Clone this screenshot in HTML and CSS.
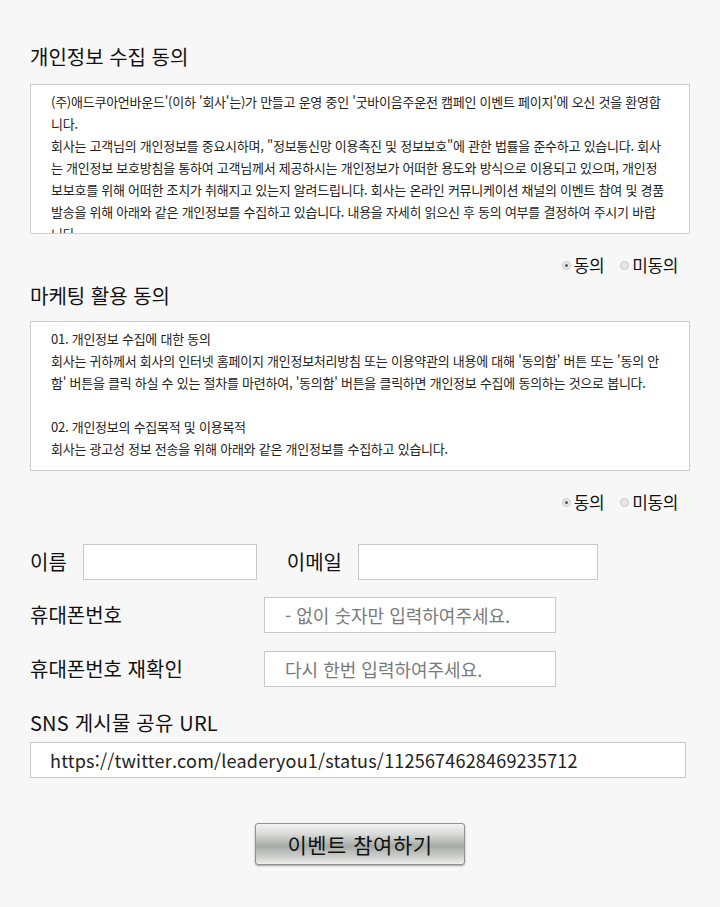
FILE: index.html
```html
<!DOCTYPE html>
<html lang="ko">
<head>
<meta charset="utf-8">
<title>이벤트 참여</title>
<link rel="stylesheet" href="styles.css">
</head>
<body>
<div class="page">
  <section class="agree">
    <h2 class="sec-title">개인정보 수집 동의</h2>
    <div class="terms terms-1">
      <p>(주)애드쿠아언바운드'(이하 '회사'는)가 만들고 운영 중인 '굿바이음주운전 캠페인 이벤트 페이지'에 오신 것을 환영합니다.<br>회사는 고객님의 개인정보를 중요시하며, "정보통신망 이용촉진 및 정보보호"에 관한 법률을 준수하고 있습니다. 회사는 개인정보 보호방침을 통하여 고객님께서 제공하시는 개인정보가 어떠한 용도와 방식으로 이용되고 있으며, 개인정보보호를 위해 어떠한 조치가 취해지고 있는지 알려드립니다. 회사는 온라인 커뮤니케이션 채널의 이벤트 참여 및 경품 발송을 위해 아래와 같은 개인정보를 수집하고 있습니다. 내용을 자세히 읽으신 후 동의 여부를 결정하여 주시기 바랍니다.</p>
    </div>
    <div class="radios">
      <label class="radio"><span class="dot checked"></span>동의</label>
      <label class="radio"><span class="dot"></span>미동의</label>
    </div>
  </section>

  <section class="agree">
    <h2 class="sec-title sec-title-2">마케팅 활용 동의</h2>
    <div class="terms terms-2">
      <p>01. 개인정보 수집에 대한 동의<br>회사는 귀하께서 회사의 인터넷 홈페이지 개인정보처리방침 또는 이용약관의 내용에 대해 '동의함' 버튼 또는 '동의 안함' 버튼을 클릭 하실 수 있는 절차를 마련하여, '동의함' 버튼을 클릭하면 개인정보 수집에 동의하는 것으로 봅니다.<br><br>02. 개인정보의 수집목적 및 이용목적<br>회사는 광고성 정보 전송을 위해 아래와 같은 개인정보를 수집하고 있습니다.</p>
    </div>
    <div class="radios">
      <label class="radio"><span class="dot checked"></span>동의</label>
      <label class="radio"><span class="dot"></span>미동의</label>
    </div>
  </section>

  <form class="form">
    <div class="row-inline">
      <span class="label">이름</span>
      <input class="field field-name" type="text">
      <span class="label label-email">이메일</span>
      <input class="field field-email" type="text">
    </div>
    <div class="row-grid">
      <span class="label">휴대폰번호</span>
      <input class="field field-phone" type="text" placeholder="- 없이 숫자만 입력하여주세요.">
    </div>
    <div class="row-grid">
      <span class="label">휴대폰번호 재확인</span>
      <input class="field field-phone" type="text" placeholder="다시 한번 입력하여주세요.">
    </div>
    <div class="row-sns">
      <span class="label">SNS 게시물 공유 URL</span>
      <input class="field field-url" type="text" value="https://twitter.com/leaderyou1/status/1125674628469235712">
    </div>
    <div class="submit-wrap">
      <button class="submit" type="button">이벤트 참여하기</button>
    </div>
  </form>
</div>
</body>
</html>
```
FILE: styles.css
```css
html, body {
  margin: 0;
  padding: 0;
  background: #f7f7f7;
}
body {
  font-family: "Noto Sans CJK KR", "Noto Sans", sans-serif;
  color: #111;
}
.page {
  width: 660px;
  padding: 0 30px;
}
.sec-title {
  margin: 0 0 14px;
  padding-top: 44px;
  font-size: 20px;
  font-weight: 400;
  line-height: 26px;
  letter-spacing: 0;
}
.sec-title-2 {
  padding-top: 1px;
  margin-bottom: 12px;
}
.terms {
  box-sizing: border-box;
  width: 660px;
  height: 150px;
  background: #fff;
  border: 1px solid #cfcfcf;
  overflow: hidden;
  padding: 6px 20px 0 20px;
}
.terms-1 {
  padding-right: 25px;
}
.terms p {
  margin: 0;
  font-size: 13px;
  line-height: 22px;
  color: #222;
  letter-spacing: -0.25px;
}
.radios {
  display: flex;
  justify-content: flex-end;
  gap: 16px;
  padding-right: 12px;
  height: 48px;
  padding-top: 13px;
  box-sizing: border-box;
  font-size: 17px;
  line-height: 22px;
  letter-spacing: -0.4px;
}
.radio {
  display: flex;
  align-items: center;
  gap: 3px;
}
.dot {
  box-sizing: border-box;
  width: 9px;
  height: 9px;
  border-radius: 50%;
  border: 1px solid #c8c8c8;
  background: #e8e8e8;
  position: relative;
  margin-top: 1px;
}
.dot.checked::after {
  content: "";
  position: absolute;
  left: 2px;
  top: 2px;
  width: 3px;
  height: 3px;
  border-radius: 50%;
  background: #555;
}
.form {
  padding-top: 25px;
}
.label {
  font-size: 20px;
  line-height: 26px;
  letter-spacing: 0;
  color: #111;
}
.field {
  box-sizing: border-box;
  height: 36px;
  border: 1px solid #c8c8c8;
  background: #fff;
  margin: 0;
  font-family: "Noto Sans CJK KR", "Noto Sans", sans-serif;
  font-size: 18px;
  color: #222;
  outline: none;
  border-radius: 0;
}
.field::placeholder {
  color: #7a7a7a;
}
.row-inline {
  display: flex;
  align-items: center;
  height: 36px;
}
.field-name {
  width: 174px;
  margin-left: 16px;
}
.label-email {
  margin-left: 30px;
}
.field-email {
  width: 240px;
  margin-left: 16px;
}
.row-grid {
  display: grid;
  grid-template-columns: 234px 292px;
  align-items: center;
  margin-top: 17px;
}
.row-grid + .row-grid {
  margin-top: 18px;
}
.field-phone {
  width: 292px;
  padding: 0 20px;
}
.row-sns {
  display: flex;
  flex-direction: column;
  margin-top: 21px;
}
.row-sns .label {
  line-height: 30px;
  letter-spacing: 0.2px;
}
.field-url {
  width: 656px;
  margin-top: 4px;
  padding: 0 19px;
  font-size: 18px;
  letter-spacing: 0.2px;
  color: #222;
}
.submit-wrap {
  display: flex;
  justify-content: center;
  padding-top: 45px;
  padding-bottom: 44px;
}
.submit {
  width: 210px;
  height: 42px;
  border: 1px solid #8e918e;
  border-radius: 3px;
  background: linear-gradient(to bottom, #f2f2f2 0%, #d9dbd9 25%, #a7aba7 55%, #c9ccc9 80%, #eeeeee 100%);
  box-shadow: 0 1px 2px rgba(0,0,0,0.35);
  font-family: "Noto Sans CJK KR", "Noto Sans", sans-serif;
  font-size: 21px;
  color: #111;
  letter-spacing: 0.5px;
  padding: 0;
}
```
